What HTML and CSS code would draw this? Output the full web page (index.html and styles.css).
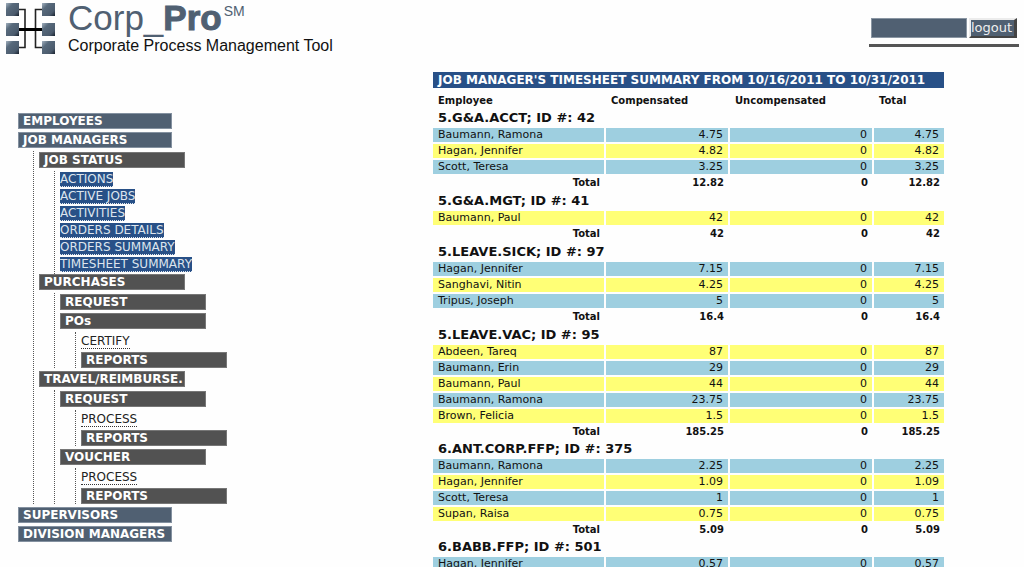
FILE: index.html
```
<!DOCTYPE html>
<html lang="en">
<head>
<meta charset="utf-8">
<title>Corp_Pro - Timesheet Summary</title>
<link rel="stylesheet" href="styles.css">
</head>
<body>
<header class="masthead">
  <div class="brand">
    <svg class="brand-mark" width="52" height="54" viewBox="0 0 52 54" aria-hidden="true">
      <defs>
        <linearGradient id="tile" x1="0" y1="0" x2="1" y2="1">
          <stop offset="0" stop-color="#a3b1bf"/>
          <stop offset=".3" stop-color="#586a7c"/>
          <stop offset=".75" stop-color="#4b5b6d"/>
          <stop offset="1" stop-color="#17202c"/>
        </linearGradient>
      </defs>
      <path d="M13 7.500h7v38h-7M38 7.500h-7.500v38H38" fill="none" stroke="#222" stroke-width="1.600"/>
      <path d="M13 27.500h25" stroke="#000" stroke-width="3"/>
      <g fill="url(#tile)">
        <rect x="1" y="1" width="13" height="13"/><rect x="1" y="21" width="13" height="13"/><rect x="1" y="39" width="13" height="13"/>
        <rect x="37" y="1" width="13" height="13"/><rect x="37" y="21" width="13" height="13"/><rect x="37" y="39" width="13" height="13"/>
      </g>
    </svg>
    <div class="brand-text">
      <h1 class="brand-name">Corp_<b>Pro</b><sup>SM</sup></h1>
      <p class="brand-tagline">Corporate Process Management Tool</p>
    </div>
  </div>
  <div class="session">
    <div class="session-user"></div>
    <button class="logout" type="button">logout</button>
  </div>
</header>

<div class="page">
  <nav class="menu" aria-label="Main menu">
    <ul class="menu-root">
      <li><a class="bar top" href="#">EMPLOYEES</a></li>
      <li><a class="bar top" href="#">JOB MANAGERS</a>
        <ul class="branch">
          <li><a class="bar" href="#">JOB STATUS</a>
            <ul class="branch selected">
              <li class="leaf"><a href="#">ACTIONS</a></li>
              <li class="leaf"><a href="#">ACTIVE JOBS</a></li>
              <li class="leaf"><a href="#">ACTIVITIES</a></li>
              <li class="leaf"><a href="#">ORDERS DETAILS</a></li>
              <li class="leaf"><a href="#">ORDERS SUMMARY</a></li>
              <li class="leaf"><a href="#">TIMESHEET SUMMARY</a></li>
            </ul>
          </li>
          <li><a class="bar" href="#">PURCHASES</a>
            <ul class="branch">
              <li><a class="bar" href="#">REQUEST</a></li>
              <li><a class="bar" href="#">POs</a>
                <ul class="branch">
                  <li class="leaf spaced"><a href="#">CERTIFY</a></li>
                  <li><a class="bar" href="#">REPORTS</a></li>
                </ul>
              </li>
            </ul>
          </li>
          <li><a class="bar" href="#">TRAVEL/REIMBURSE.</a>
            <ul class="branch">
              <li><a class="bar" href="#">REQUEST</a>
                <ul class="branch">
                  <li class="leaf spaced"><a href="#">PROCESS</a></li>
                  <li><a class="bar" href="#">REPORTS</a></li>
                </ul>
              </li>
              <li><a class="bar" href="#">VOUCHER</a>
                <ul class="branch">
                  <li class="leaf spaced"><a href="#">PROCESS</a></li>
                  <li><a class="bar" href="#">REPORTS</a></li>
                </ul>
              </li>
            </ul>
          </li>
        </ul>
      </li>
      <li><a class="bar top" href="#">SUPERVISORS</a></li>
      <li><a class="bar top" href="#">DIVISION MANAGERS</a></li>
    </ul>
  </nav>

  <main class="report">
    <table class="summary">
      <colgroup><col class="c-name"><col class="c-comp"><col class="c-uncomp"><col class="c-total"></colgroup>
      <thead>
        <tr class="title"><th colspan="4">JOB MANAGER'S TIMESHEET SUMMARY FROM 10/16/2011 TO 10/31/2011</th></tr>
        <tr class="heads"><th scope="col">Employee</th><th scope="col">Compensated</th><th scope="col">Uncompensated</th><th scope="col">Total</th></tr>
      </thead>
      <tbody>
        <tr class="group"><th colspan="4">5.G&amp;A.ACCT; ID #: 42</th></tr>
        <tr class="blue"><td>Baumann, Ramona</td><td>4.75</td><td>0</td><td>4.75</td></tr>
        <tr class="yellow"><td>Hagan, Jennifer</td><td>4.82</td><td>0</td><td>4.82</td></tr>
        <tr class="blue"><td>Scott, Teresa</td><td>3.25</td><td>0</td><td>3.25</td></tr>
        <tr class="sum"><td>Total</td><td>12.82</td><td>0</td><td>12.82</td></tr>
      </tbody>
      <tbody>
        <tr class="group roomy"><th colspan="4">5.G&amp;A.MGT; ID #: 41</th></tr>
        <tr class="yellow"><td>Baumann, Paul</td><td>42</td><td>0</td><td>42</td></tr>
        <tr class="sum"><td>Total</td><td>42</td><td>0</td><td>42</td></tr>
      </tbody>
      <tbody>
        <tr class="group roomy"><th colspan="4">5.LEAVE.SICK; ID #: 97</th></tr>
        <tr class="blue"><td>Hagan, Jennifer</td><td>7.15</td><td>0</td><td>7.15</td></tr>
        <tr class="yellow"><td>Sanghavi, Nitin</td><td>4.25</td><td>0</td><td>4.25</td></tr>
        <tr class="blue"><td>Tripus, Joseph</td><td>5</td><td>0</td><td>5</td></tr>
        <tr class="sum"><td>Total</td><td>16.4</td><td>0</td><td>16.4</td></tr>
      </tbody>
      <tbody>
        <tr class="group roomy"><th colspan="4">5.LEAVE.VAC; ID #: 95</th></tr>
        <tr class="yellow"><td>Abdeen, Tareq</td><td>87</td><td>0</td><td>87</td></tr>
        <tr class="blue"><td>Baumann, Erin</td><td>29</td><td>0</td><td>29</td></tr>
        <tr class="yellow"><td>Baumann, Paul</td><td>44</td><td>0</td><td>44</td></tr>
        <tr class="blue"><td>Baumann, Ramona</td><td>23.75</td><td>0</td><td>23.75</td></tr>
        <tr class="yellow"><td>Brown, Felicia</td><td>1.5</td><td>0</td><td>1.5</td></tr>
        <tr class="sum"><td>Total</td><td>185.25</td><td>0</td><td>185.25</td></tr>
      </tbody>
      <tbody>
        <tr class="group"><th colspan="4">6.ANT.CORP.FFP; ID #: 375</th></tr>
        <tr class="blue"><td>Baumann, Ramona</td><td>2.25</td><td>0</td><td>2.25</td></tr>
        <tr class="yellow"><td>Hagan, Jennifer</td><td>1.09</td><td>0</td><td>1.09</td></tr>
        <tr class="blue"><td>Scott, Teresa</td><td>1</td><td>0</td><td>1</td></tr>
        <tr class="yellow"><td>Supan, Raisa</td><td>0.75</td><td>0</td><td>0.75</td></tr>
        <tr class="sum"><td>Total</td><td>5.09</td><td>0</td><td>5.09</td></tr>
      </tbody>
      <tbody>
        <tr class="group"><th colspan="4">6.BABB.FFP; ID #: 501</th></tr>
        <tr class="blue"><td>Hagan, Jennifer</td><td>0.57</td><td>0</td><td>0.57</td></tr>
      </tbody>
    </table>
  </main>
</div>
</body>
</html>
```

FILE: styles.css
```
* { box-sizing: border-box; }

html { scrollbar-width: none; }

body {
  margin: 0;
  background: #fefefe;
  color: #111;
  font-family: "DejaVu Sans", Verdana, sans-serif;
}

/* Masthead */
.masthead {
  display: flex;
  justify-content: space-between;
  align-items: flex-start;
  padding: 2px 5px 0;
}

.brand { display: flex; gap: 11px; }

.brand-text { font-family: "Liberation Sans", Arial, sans-serif; }

.brand-name {
  margin: 0;
  font-size: 35px;
  font-weight: 400;
  line-height: 32px;
  color: #506072;
  white-space: nowrap;
}

.brand-name b { -webkit-text-stroke: 1px #506072; }

.brand-name sup {
  margin-left: 2px;
  font-size: 14px;
  line-height: 14px;
  vertical-align: 14px;
}

.brand-tagline {
  margin: 2px 0 0;
  font-size: 16px;
  line-height: 20px;
  color: #111;
  white-space: nowrap;
}

.session {
  display: flex;
  gap: 2px;
  width: 150px;
  margin-top: 16px;
  padding: 0 2px 6px;
  border-bottom: 3px solid #555;
}

.session-user {
  flex: 1;
  background: #506072;
  border: 1px solid #8a96a3;
}

.logout {
  height: 20px;
  padding: 0 2px 0 0;
  border: 2px solid;
  border-color: #ececec #444 #444 #ececec;
  border-right-width: 3px;
  background: #506072;
  color: #eee;
  font: 13px/16px "DejaVu Sans", Verdana, sans-serif;
}

/* Page body */
.page {
  display: grid;
  grid-template-columns: 413px 1fr;
  padding-left: 18px;
  padding-top: 14px;
}

/* Menu */
.menu { padding-top: 43px; }

.menu ul { list-style: none; margin: 0; padding: 0; }

.bar {
  display: block;
  width: 146px;
  height: 16px;
  margin-bottom: 3px;
  padding-left: 4px;
  border: 1px solid #777;
  background: #525252;
  color: #fff;
  font-size: 12px;
  font-weight: 700;
  line-height: 14px;
  text-decoration: none;
  white-space: nowrap;
}

.bar.top {
  width: 154px;
  border-color: #8491a0;
  background: #506072;
}

.menu .branch {
  margin-left: 15px;
  padding: 1px 0 0 5px;
  border-left: 1px dotted #555;
}

.leaf { height: 17px; line-height: 15px; font-size: 12px; }
.leaf.spaced { height: 19px; line-height: 17px; }

.leaf a {
  color: #222;
  text-decoration: none;
  border-bottom: 1px dotted #333;
}

.selected .leaf a {
  background: #285087;
  color: #dde5ee;
  border-bottom-color: #dde5ee;
}

/* Report */
.summary {
  width: 100%;
  max-width: 515px;
  table-layout: fixed;
  border-spacing: 2px;
  font-size: 11px;
}

.c-name { width: 171px; }
.c-comp { width: 122px; }
.c-uncomp { width: 142px; }
.c-total { width: 70px; }

.summary th,
.summary td {
  height: 14px;
  padding: 0 5px;
  line-height: 14px;
  text-align: right;
  white-space: nowrap;
}

.summary td:first-child,
.summary th:first-child { text-align: left; }

.summary .title th {
  height: 16px;
  padding-right: 0;
  background: #285087;
  color: #fff;
  font-size: 12px;
  line-height: 16px;
}

.summary .heads th {
  height: 18px;
  padding-top: 3px;
  font-size: 10px;
  line-height: 15px;
  text-align: left;
}

.summary .group th {
  height: 16px;
  font-size: 13px;
  line-height: 16px;
}

.summary .group.roomy th { height: 17px; }

.blue td { background: #9ecfe0; }
.yellow td { background: #ffff76; }

.summary .sum td {
  padding-right: 4px;
  font-size: 10px;
  font-weight: 700;
  text-align: right;
}
```
